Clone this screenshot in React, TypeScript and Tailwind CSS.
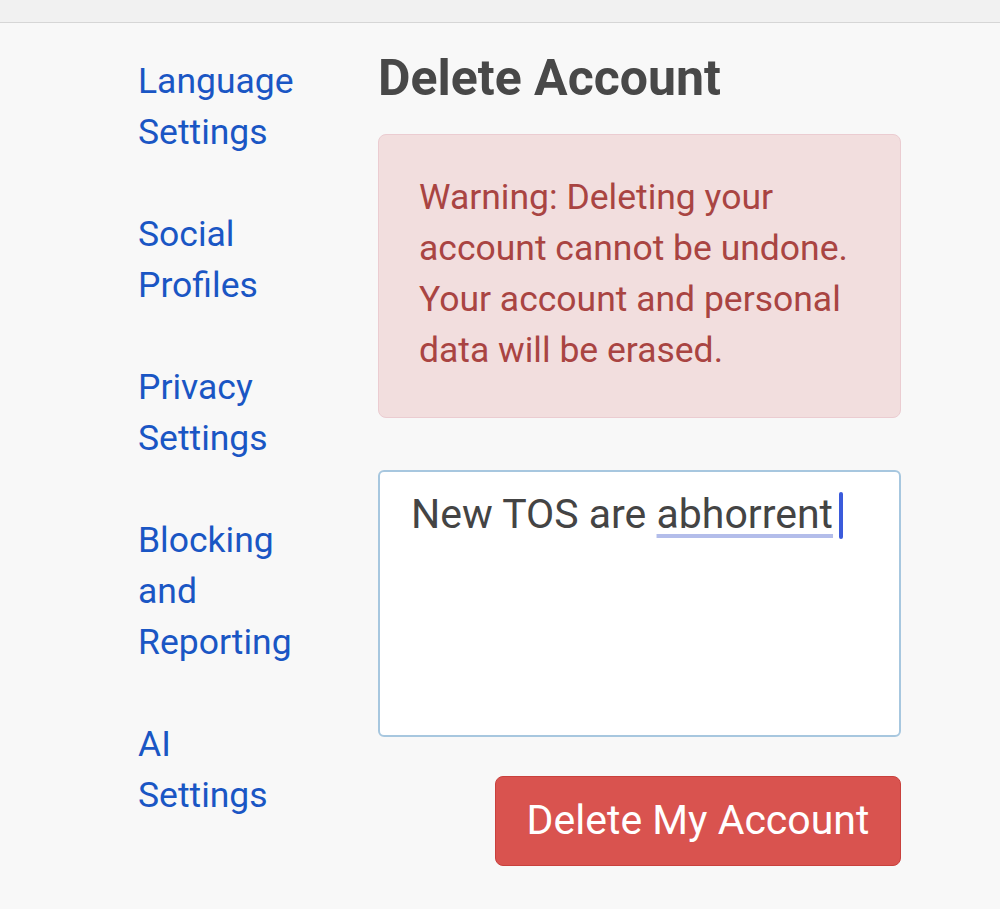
export default function App() {
  const links = [
    ['Language', 'Settings'],
    ['Social', 'Profiles'],
    ['Privacy', 'Settings'],
    ['Blocking', 'and', 'Reporting'],
    ['AI', 'Settings'],
  ]

  return (
    <div className="min-h-[909px] bg-[#f8f8f8] font-['Roboto',sans-serif]">
      {/* browser chrome strip */}
      <div className="h-[23px] border-b border-[#d6d6d6] bg-[#f1f1f1]" />

      <div className="flex pl-[138px]">
        {/* side nav */}
        <nav className="w-[240px] pt-[33px]">
          {links.map((group, i) => (
            <a key={i} href="#" className="mb-[51px] block text-[35.5px] leading-[51px] text-[#1a56c4]">
              {group.map((w) => (
                <span key={w} className="block">{w}</span>
              ))}
            </a>
          ))}
        </nav>

        {/* main */}
        <main className="flex w-[523px] flex-col pt-[27px]">
          <h1 className="text-[50px] font-bold leading-[56px] text-[#484848]">Delete Account</h1>

          <div className="mt-[28px] rounded-[8px] border border-[#ebccd1] bg-[#f2dede] px-[40px] pb-[41px] pt-[37px] text-[35.5px] leading-[51px] text-[#a94442]">
            Warning: Deleting your account cannot be undone. Your account and personal data will be erased.
          </div>

          <div className="mt-[52px] h-[267px] rounded-[6px] border-2 border-[#a7c7df] bg-white pl-[31px] pt-[18px] text-[41px] leading-[48px] text-[#444444]">
            New TOS are{' '}
            <span className="underline decoration-[#b3bdea] decoration-[4px] underline-offset-[6px]">abhorrent</span>
            <span className="ml-[6px] inline-block h-[47px] w-[4px] rounded-sm bg-[#3b5bdb] align-[-11px]" />
          </div>

          <button className="mt-[39px] h-[90px] w-[406px] self-end rounded-[8px] border border-[#c9413d] bg-[#d9534f] text-[41px] text-white">
            Delete My Account
          </button>
        </main>
      </div>
    </div>
  )
}
